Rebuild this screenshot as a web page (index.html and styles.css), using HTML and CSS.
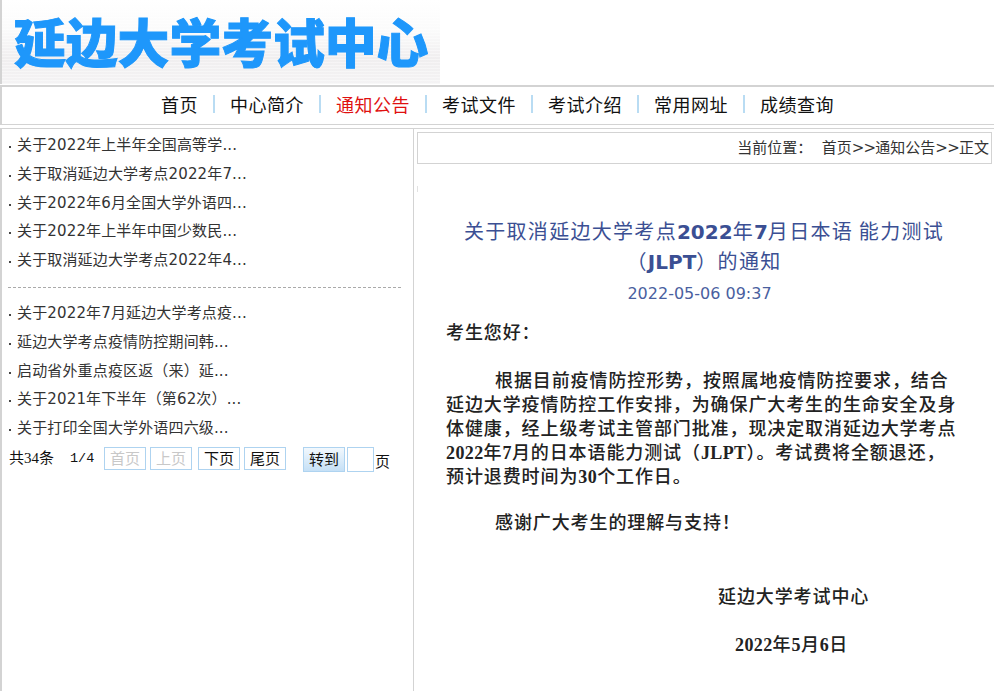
FILE: index.html
```html
<!DOCTYPE html>
<html lang="zh-CN">
<head>
<meta charset="utf-8">
<title>延边大学考试中心</title>
<link rel="stylesheet" href="styles.css">
</head>
<body>
<header class="banner">
  <div class="logo"><span class="logo-text">延边大学考试中心</span></div>
</header>
<nav class="nav">
  <a class="nav-item">首页</a>
  <a class="nav-item">中心简介</a>
  <a class="nav-item current">通知公告</a>
  <a class="nav-item">考试文件</a>
  <a class="nav-item">考试介绍</a>
  <a class="nav-item">常用网址</a>
  <a class="nav-item">成绩查询</a>
</nav>
<main class="main">
  <aside class="side">
    <ul class="list">
      <li>关于2022年上半年全国高等学...</li>
      <li>关于取消延边大学考点2022年7...</li>
      <li>关于2022年6月全国大学外语四...</li>
      <li>关于2022年上半年中国少数民...</li>
      <li>关于取消延边大学考点2022年4...</li>
    </ul>
    <hr class="divider">
    <ul class="list">
      <li>关于2022年7月延边大学考点疫...</li>
      <li>延边大学考点疫情防控期间韩...</li>
      <li>启动省外重点疫区返（来）延...</li>
      <li>关于2021年下半年（第62次）...</li>
      <li>关于打印全国大学外语四六级...</li>
    </ul>
    <div class="pager">
      <span class="count">共34条</span>
      <span class="pages">1/4</span>
      <span class="btn off">首页</span>
      <span class="btn off wide-gap">上页</span>
      <span class="btn">下页</span>
      <span class="btn">尾页</span>
      <span class="btn go">转到</span>
      <span class="page-input"></span>
      <span class="page-unit">页</span>
    </div>
  </aside>
  <section class="content">
    <div class="crumb">当前位置：&nbsp; 首页<span class="sep">&gt;&gt;</span>通知公告<span class="sep">&gt;&gt;</span>正文</div>
    <div class="tick"></div>
    <article class="article">
      <h1 class="title">关于取消延边大学考点<b>2022</b>年<b>7</b>月日本语 能力测试（<b>JLPT</b>）的通知</h1>
      <p class="date">2022-05-06 09:37</p>
      <p class="para greet">考生您好：</p>
      <p class="para indent gap">根据目前疫情防控形势，按照属地疫情防控要求，结合延边大学疫情防控工作安排，为确保广大考生的生命安全及身体健康，经上级考试主管部门批准，现决定取消延边大学考点<b>2022</b>年<b>7</b>月的日本语能力测试（<b>JLPT</b>）。考试费将全额退还，预计退费时间为<b>30</b>个工作日。</p>
      <p class="para indent thanks">感谢广大考生的理解与支持！</p>
      <p class="para sign">延边大学考试中心</p>
      <p class="para sign-date"><b>2022</b>年<b>5</b>月<b>6</b>日</p>
    </article>
  </section>
</main>
</body>
</html>
```

FILE: styles.css
```css
html, body { margin: 0; padding: 0; background: #fff; }
body {
  width: 994px;
  height: 691px;
  overflow: hidden;
  color: #222;
  font-family: "DejaVu Sans", "Noto Sans CJK SC", sans-serif;
  font-size: 15px;
}
.banner {
  height: 84px;
  border-left: 2px solid #d3d3d3;
  box-sizing: border-box;
}
.logo {
  width: 438px;
  height: 84px;
  box-sizing: border-box;
  padding: 12px 0 0 12px;
  background:
    repeating-linear-gradient(#ffffff00 0 2px, #ffffff66 2px 3px),
    linear-gradient(#fff 0%, #fbfbfb 35%, #f0eeef 70%, #f4f3f4 100%);
}
.logo-text {
  display: block;
  font-family: "Noto Sans CJK SC", sans-serif;
  font-weight: 900;
  font-size: 51.8px;
  line-height: 58px;
  color: #1e97fb;
  -webkit-text-stroke: 1px #1e97fb;
  white-space: nowrap;
}
.nav {
  height: 34px;
  margin-top: 1px;
  border-top: 2px solid #d3d3d3;
  border-bottom: 1px solid #d3d3d3;
  border-left: 2px solid #d3d3d3;
  display: flex;
  justify-content: center;
  align-items: center;
  padding-right: 1px;
  padding-bottom: 3px;
  font-family: "Noto Sans CJK SC", sans-serif;
  font-size: 18px;
  color: #111;
}
.nav-item {
  padding: 0 15px;
  line-height: 18px;
  border-left: 2px solid #b9dcf3;
  letter-spacing: .5px;
}
.nav-item:first-child { border-left: 0; }
.nav-item.current { color: #e01010; }
.main {
  margin-top: 3px;
  height: 562px;
  border-top: 1px solid #d3d3d3;
  display: flex;
}
.side {
  flex: none;
  width: 406px;
  border-left: 2px solid #d3d3d3;
  border-right: 1px solid #d3d3d3;
  padding: 2px 0 0 5px;
}
.list { margin: 0; padding: 0; list-style: none; }
.list li {
  height: 28.8px;
  line-height: 28.8px;
  font-size: 15px;
  letter-spacing: .15px;
  color: #333;
  padding-left: 10px;
  position: relative;
  white-space: nowrap;
}
.list li::before {
  content: "";
  position: absolute;
  left: 2px;
  top: 15px;
  width: 2px;
  height: 2px;
  background: #444;
}
.divider {
  margin: 12px 12px 11px 1px;
  border: 0;
  border-top: 1px dashed #aaa;
}
.pager {
  display: flex;
  align-items: flex-start;
  height: 25px;
  margin-top: 4px;
  padding-left: 2px;
  font-family: "Noto Sans CJK SC", sans-serif;
  font-size: 15px;
  line-height: 23px;
  color: #111;
}
.count { font-family: "Liberation Serif", "Noto Sans CJK SC", serif; }
.pages { width: 50px; box-sizing: border-box; padding-left: 16px; font-family: "Liberation Mono", monospace; font-size: 13.5px; white-space: nowrap; }
.btn {
  width: 42px;
  height: 23px;
  box-sizing: border-box;
  margin-right: 4px;
  border: 1px solid #aed3f0;
  text-align: center;
  line-height: 20px;
}
.btn.wide-gap { margin-right: 6px; }
.btn.off { color: #c8c8c8; }
.btn.go {
  margin-left: 13px;
  margin-right: 2px;
  height: 25px;
  line-height: 22px;
  background: linear-gradient(#f2f8fd, #c5e0f6);
}
.page-input {
  width: 27px;
  height: 25px;
  box-sizing: border-box;
  border: 1px solid #aed3f0;
  margin-right: 1px;
}
.page-unit { line-height: 27px; }
.content { flex: 1; padding: 3px 2px 0 3px; min-width: 0; }
.crumb {
  height: 32px;
  box-sizing: border-box;
  border: 1px solid #d3d3d3;
  padding-right: 2px;
  text-align: right;
  line-height: 30px;
  font-size: 15px;
  color: #333;
}
.sep { letter-spacing: -.75px; }
.tick { width: 1px; height: 6px; margin-top: 22px; background: #e2e2e2; }
.article { padding: 0 30px 0 29px; }
.title {
  margin: 24px 0 0;
  text-align: center;
  color: #3b4f93;
  font-family: "Noto Sans CJK SC", sans-serif;
  font-size: 20px;
  font-weight: 400;
  line-height: 30px;
  letter-spacing: 1.3px;
}
.title b { font-family: "DejaVu Sans", sans-serif; font-weight: 700; letter-spacing: 0; line-height: 1; }
.date {
  margin: 8px 0 0;
  padding-right: 9px;
  text-align: center;
  color: #4a5f9f;
  font-size: 16px;
  line-height: 20px;
}
.para {
  margin: 0;
  font-family: "Noto Sans CJK SC", sans-serif;
  font-size: 18px;
  font-weight: 500;
  line-height: 24px;
  letter-spacing: .9px;
  color: #222;
}
.para b { font-family: "Liberation Serif", serif; font-weight: 700; letter-spacing: .4px; line-height: 1; }
.greet { margin-top: 15px; }
.gap { margin-top: 24px; }
.thanks { margin-top: 22px; }
.indent { text-indent: 49px; }
.sign { margin-top: 50px; padding-left: 272px; }
.sign-date { margin-top: 24px; padding-left: 289px; }
```
